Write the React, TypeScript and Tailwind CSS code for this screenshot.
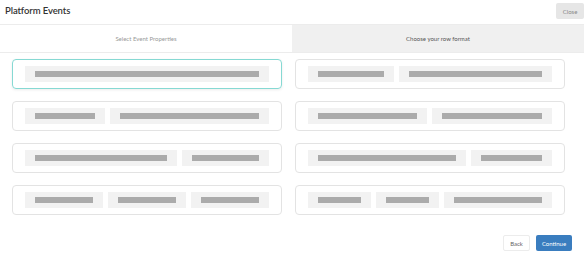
import React from "react";

type Row = number[];

// pill widths per card, 0 = fill the rest
const leftRows: Row[] = [[0], [80, 0], [152, 0], [78, 78, 0]];
const rightRows: Row[] = [[86, 0], [119, 0], [158, 0], [63, 63, 0]];

const Pill = ({ width }: { width: number }) => (
   <div
      className={`h-[16px] bg-[#f2f2f2] px-[10px] flex items-center ${width ? "shrink-0" : "flex-1"}`}
      style={width ? { width } : undefined}
   >
      <div className="h-[6px] w-full bg-[#ababab]" />
   </div>
);

const Card = ({ row, active }: { row: Row; active?: boolean }) => (
   <div
      className={`h-[30px] rounded-[4px] border px-[12px] flex items-center gap-[5px] ${
         active ? "border-[#86d9d3] shadow-[0_1px_3px_rgba(0,0,0,0.08)]" : "border-[#e3e3e3]"
      }`}
   >
      {row.map((w, i) => (
         <Pill key={i} width={w} />
      ))}
   </div>
);

export default function App() {
   return (
      <div className="w-[584px] h-[263px] bg-white font-['Lato','Open_Sans',sans-serif] overflow-hidden">
         {/* Header */}
         <div className="h-[24px] flex justify-between items-start">
            <h1 className="pl-[5px] pt-[3px] text-[9.5px] leading-[16px] font-semibold text-[#333] tracking-[-0.1px]">
               Platform Events
            </h1>
            <button className="mt-[3px] h-[16px] w-[28px] rounded-[2px] bg-[#e6e6e6] text-[6px] text-[#888]">
               Close
            </button>
         </div>

         {/* Tabs */}
         <div className="grid grid-cols-2 h-[29px] border-y border-[#ececec]">
            <div className="flex items-center justify-center text-[6px] text-[#999]">
               Select Event Properties
            </div>
            <div className="flex items-center justify-center bg-[#f0f0f0] text-[6px] text-[#555]">
               Choose your row format
            </div>
         </div>

         {/* Cards */}
         <div className="grid grid-cols-2 pt-[6px]">
            <div className="pl-[12px] pr-[10px] flex flex-col gap-[12px]">
               {leftRows.map((r, i) => (
                  <Card key={i} row={r} active={i === 0} />
               ))}
            </div>
            <div className="pl-[3px] pr-[19px] flex flex-col gap-[12px]">
               {rightRows.map((r, i) => (
                  <Card key={i} row={r} />
               ))}
            </div>
         </div>

         {/* Footer */}
         <div className="flex justify-end gap-[6px] pr-[12px] mt-[20px]">
            <button className="h-[16px] w-[27px] rounded-[2px] border border-[#ececec] bg-white text-[6px] text-[#666]">
               Back
            </button>
            <button className="h-[16px] w-[36px] rounded-[2px] bg-[#3a7dbf] text-[6px] text-white">
               Continue
            </button>
         </div>
      </div>
   );
}
